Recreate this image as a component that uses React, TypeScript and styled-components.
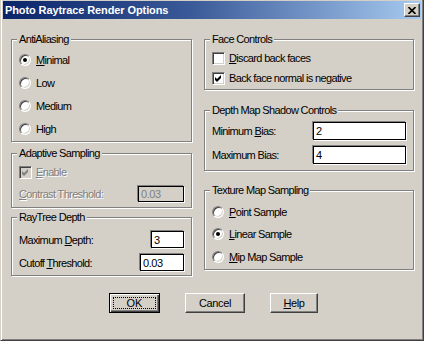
import React from "react";
import styled, { createGlobalStyle } from "styled-components";

const GlobalStyle = createGlobalStyle`
  html, body {
    margin: 0;
    padding: 0;
    background: #d4d0c8;
  }
  body {
    font-family: "Liberation Sans", Arial, sans-serif;
    font-size: 11px;
    color: #000;
  }
`;

const Window = styled.div`
  width: 424px;
  height: 341px;
  box-sizing: border-box;
  background: #d4d0c8;
  border-left: 1px solid #d4d0c8;
  border-right: 1px solid #404040;
  border-bottom: 1px solid #404040;
  box-shadow: inset 1px 0 #fff, inset -1px -1px #808080;
  padding: 1px 2px 0 2px;
  display: flex;
  flex-direction: column;
`;

const TitleBar = styled.div`
  height: 18px;
  display: flex;
  align-items: center;
  background: linear-gradient(to right, #0a246a 0%, #3a5a98 45%, #a6caf0 100%);
  padding-left: 2px;
`;

const TitleText = styled.span`
  color: #fff;
  font-weight: bold;
  font-size: 11px;
  letter-spacing: -0.1px;
  white-space: nowrap;
`;

const CloseButton = styled.button`
  margin-left: auto;
  margin-right: 1px;
  width: 16px;
  height: 14px;
  box-sizing: border-box;
  padding: 0;
  background: #d4d0c8;
  border: 1px solid;
  border-color: #fff #404040 #404040 #fff;
  box-shadow: inset -1px -1px #808080;
  display: flex;
  align-items: center;
  justify-content: center;
`;

const Body = styled.div`
  display: flex;
  flex-direction: column;
  padding: 20px 0 0 8px;
`;

const Columns = styled.div`
  display: flex;
  align-items: flex-start;
  gap: 12px;
`;

const Column = styled.div<{ $w: number }>`
  width: ${(p) => p.$w}px;
  display: flex;
  flex-direction: column;
`;

const Group = styled.div<{ $h: number; $mt?: number }>`
  height: ${(p) => p.$h}px;
  margin-top: ${(p) => p.$mt ?? 0}px;
  box-sizing: border-box;
  border: 1px solid #808080;
  box-shadow: inset 1px 1px #fff, 1px 1px #fff;
  display: flex;
  flex-direction: column;
  padding: 0 7px;
`;

const GroupTitle = styled.div<{ $mb?: number }>`
  align-self: flex-start;
  height: 13px;
  line-height: 13px;
  margin: -7px 0 ${(p) => p.$mb ?? 0}px -2px;
  padding: 0 2px;
  background: #d4d0c8;
  letter-spacing: -0.65px;
  white-space: nowrap;
`;

const Row = styled.div<{ $h: number; $gap?: number }>`
  height: ${(p) => p.$h}px;
  display: flex;
  align-items: center;
  gap: ${(p) => p.$gap ?? 5}px;
  white-space: nowrap;
`;

const FieldRow = styled.div<{ $h: number }>`
  height: ${(p) => p.$h}px;
  display: flex;
  align-items: center;
  justify-content: space-between;
  white-space: nowrap;
`;

const Label = styled.span<{ $disabled?: boolean }>`
  letter-spacing: -0.65px;
  color: ${(p) => (p.$disabled ? "#808080" : "#000")};
  text-shadow: ${(p) => (p.$disabled ? "1px 1px #fff" : "none")};
`;

const Radio = styled.span<{ $on?: boolean }>`
  position: relative;
  flex: none;
  width: 12px;
  height: 12px;
  box-sizing: border-box;
  border-radius: 50%;
  background: #fff;
  border: 1px solid;
  border-color: #808080 #fff #fff #808080;
  box-shadow: inset 1px 1px #404040, inset -1px -1px #d4d0c8;
  &::after {
    content: "";
    display: ${(p) => (p.$on ? "block" : "none")};
    position: absolute;
    left: 3px;
    top: 3px;
    width: 4px;
    height: 4px;
    border-radius: 50%;
    background: #000;
  }
`;

const Check = styled.span<{ $disabled?: boolean }>`
  flex: none;
  width: 13px;
  height: 13px;
  box-sizing: border-box;
  background: ${(p) => (p.$disabled ? "#d4d0c8" : "#fff")};
  border: 1px solid;
  border-color: #808080 #fff #fff #808080;
  box-shadow: inset 1px 1px #404040, inset -1px -1px #d4d0c8;
  display: flex;
  align-items: center;
  justify-content: center;
`;

const Field = styled.div<{ $w: number; $h: number; $disabled?: boolean }>`
  width: ${(p) => p.$w}px;
  height: ${(p) => p.$h}px;
  box-sizing: border-box;
  border: 1px solid #000;
  box-shadow: -1px -1px #808080, 1px 1px #fff;
  background: ${(p) => (p.$disabled ? "#d4d0c8" : "#fff")};
  color: ${(p) => (p.$disabled ? "#808080" : "#000")};
  padding: 0 2px;
  display: flex;
  align-items: center;
  letter-spacing: -0.4px;
`;

const Footer = styled.div`
  display: flex;
  gap: 25px;
  margin-top: 17px;
  padding-left: 98px;
`;

const Button = styled.button<{ $w: number; $default?: boolean }>`
  width: ${(p) => p.$w}px;
  height: 20px;
  box-sizing: border-box;
  padding: 0;
  background: #d4d0c8;
  font-family: "Liberation Sans", Arial, sans-serif;
  font-size: 11px;
  color: #000;
  display: flex;
  align-items: stretch;
  justify-content: center;
  border: 1px solid;
  border-color: ${(p) => (p.$default ? "#000" : "#fff #404040 #404040 #fff")};
  box-shadow: ${(p) =>
    p.$default
      ? "inset 1px 1px #fff, inset -1px -1px #404040, inset -2px -2px #808080"
      : "inset -1px -1px #808080"};
`;

const FocusRect = styled.span`
  flex: 1;
  margin: 3px;
  border: 1px dotted #000;
  display: flex;
  align-items: center;
  justify-content: center;
`;

const Caption = styled.span`
  display: flex;
  align-items: center;
  letter-spacing: -0.4px;
`;

const CheckMark: React.FC<{ color?: string }> = ({ color = "#000" }) => (
  <svg width="7" height="7" viewBox="0 0 7 7">
    <polygon points="0,2 2,4 6,0 6,3 2,7 0,5" fill={color} />
  </svg>
);

const CloseGlyph = () => (
  <svg width="8" height="7" viewBox="0 0 8 7">
    <path d="M0.5 0 L7.5 7 M7.5 0 L0.5 7" stroke="#000" strokeWidth="1.6" />
  </svg>
);

const App: React.FC = () => {
  return (
    <>
      <GlobalStyle />
      <Window>
        <TitleBar>
          <TitleText>Photo Raytrace Render Options</TitleText>
          <CloseButton>
            <CloseGlyph />
          </CloseButton>
        </TitleBar>
        <Body>
          <Columns>
            <Column $w={181}>
              <Group $h={103}>
                <GroupTitle $mb={2}>AntiAliasing</GroupTitle>
                <Row $h={23}>
                  <Radio $on />
                  <Label>
                    <u>M</u>inimal
                  </Label>
                </Row>
                <Row $h={23}>
                  <Radio />
                  <Label>Low</Label>
                </Row>
                <Row $h={23}>
                  <Radio />
                  <Label>Medium</Label>
                </Row>
                <Row $h={23}>
                  <Radio />
                  <Label>High</Label>
                </Row>
              </Group>

              <Group $h={55} $mt={11}>
                <GroupTitle $mb={1}>Adaptive Sampling</GroupTitle>
                <Row $h={22} $gap={4}>
                  <Check $disabled>
                    <CheckMark color="#808080" />
                  </Check>
                  <Label $disabled>
                    <u>E</u>nable
                  </Label>
                </Row>
                <FieldRow $h={22}>
                  <Label $disabled>
                    <u>C</u>ontrast Threshold:
                  </Label>
                  <Field $w={46} $h={16} $disabled>
                    0.03
                  </Field>
                </FieldRow>
              </Group>

              <Group $h={59} $mt={9}>
                <GroupTitle $mb={4}>RayTree Depth</GroupTitle>
                <FieldRow $h={23}>
                  <Label>
                    Maximum <u>D</u>epth:
                  </Label>
                  <Field $w={33} $h={17}>
                    3
                  </Field>
                </FieldRow>
                <FieldRow $h={23}>
                  <Label>
                    Cutoff <u>T</u>hreshold:
                  </Label>
                  <Field $w={44} $h={17}>
                    0.03
                  </Field>
                </FieldRow>
              </Group>
            </Column>

            <Column $w={210}>
              <Group $h={51}>
                <GroupTitle $mb={2}>Face Controls</GroupTitle>
                <Row $h={20} $gap={4}>
                  <Check />
                  <Label>
                    <u>D</u>iscard back faces
                  </Label>
                </Row>
                <Row $h={20} $gap={4}>
                  <Check>
                    <CheckMark />
                  </Check>
                  <Label>Back face normal is negative</Label>
                </Row>
              </Group>

              <Group $h={61} $mt={20}>
                <GroupTitle $mb={2}>Depth Map Shadow Controls</GroupTitle>
                <FieldRow $h={24}>
                  <Label>
                    Minimum <u>B</u>ias:
                  </Label>
                  <Field $w={93} $h={18}>
                    2
                  </Field>
                </FieldRow>
                <FieldRow $h={24}>
                  <Label>Maximum Bias:</Label>
                  <Field $w={93} $h={18}>
                    4
                  </Field>
                </FieldRow>
              </Group>

              <Group $h={80} $mt={19}>
                <GroupTitle $mb={4}>Texture Map Sampling</GroupTitle>
                <Row $h={22}>
                  <Radio />
                  <Label>
                    <u>P</u>oint Sample
                  </Label>
                </Row>
                <Row $h={22}>
                  <Radio $on />
                  <Label>
                    <u>L</u>inear Sample
                  </Label>
                </Row>
                <Row $h={23}>
                  <Radio />
                  <Label>
                    <u>M</u>ip Map Sample
                  </Label>
                </Row>
              </Group>
            </Column>
          </Columns>

          <Footer>
            <Button $w={51} $default>
              <FocusRect>OK</FocusRect>
            </Button>
            <Button $w={60}>
              <Caption>Cancel</Caption>
            </Button>
            <Button $w={48}>
              <Caption>
                <u>H</u>elp
              </Caption>
            </Button>
          </Footer>
        </Body>
      </Window>
    </>
  );
};

export default App;
